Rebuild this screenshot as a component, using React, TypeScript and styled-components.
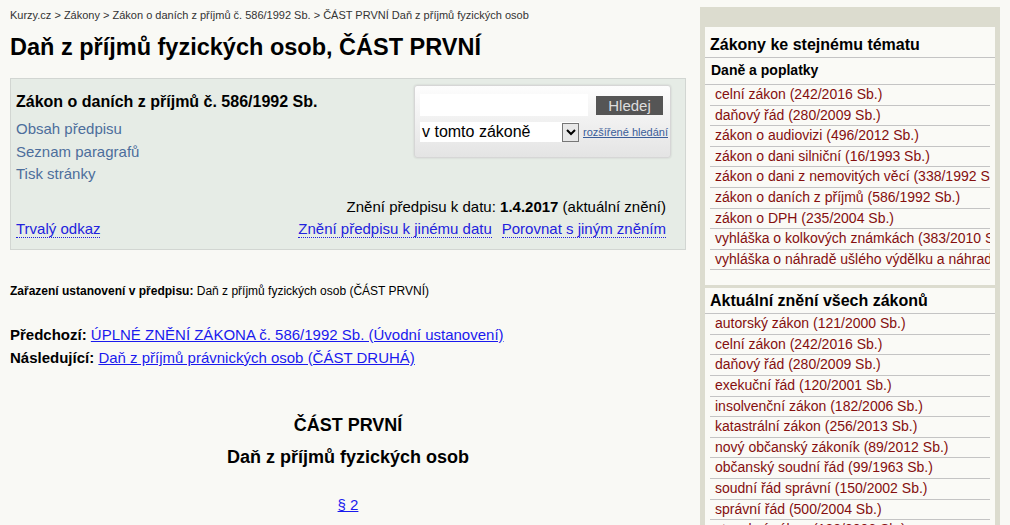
import React from "react";
import styled, { createGlobalStyle } from "styled-components";

const Global = createGlobalStyle`
  html, body { margin: 0; padding: 0; background: #f9f9f5; }
  body { font-family: "Liberation Sans", Arial, sans-serif; color: #000; }
`;

const Page = styled.div`
  display: flex;
  align-items: flex-start;
  width: 1010px;
  height: 525px;
  overflow: hidden;
`;

const Main = styled.div`
  width: 676px;
  padding: 8px 0 0 10px;
  flex: none;
`;

const Crumbs = styled.div`
  font-size: 11px;
  line-height: 14px;
  color: #333;
`;

const Title = styled.h1`
  margin: 10px 0 0;
  font-size: 23.5px;
  line-height: 30px;
  font-weight: bold;
`;

const Box = styled.div`
  margin-top: 16px;
  height: 172px;
  background: #e6ece6;
  border: 1px solid #d2d6d2;
  box-sizing: border-box;
  padding: 12px 19px 0 5px;
  display: grid;
  grid-template-columns: 1fr auto;
  align-content: start;
`;

const LawName = styled.div`
  font-size: 16px;
  font-weight: bold;
  line-height: 22px;
  margin-bottom: 5px;
`;

const SideLinks = styled.div`
  grid-column: 1;
  grid-row: 1;
  display: flex;
  flex-direction: column;
`;

const MutedLink = styled.a`
  color: #4d6e9c;
  font-size: 15px;
  line-height: 22.5px;
  text-decoration: none;
`;

const SearchBox = styled.div`
  grid-column: 2;
  grid-row: 1;
  align-self: start;
  width: 257px;
  height: 73px;
  margin-top: -6px;
  margin-right: -5px;
  box-sizing: border-box;
  border: 1px solid #d6d6d6;
  border-radius: 3px;
  background: linear-gradient(#fdfdfd, #e4e4e4);
  box-shadow: 0 0 2px rgba(0, 0, 0, 0.15);
  padding: 8px 5px 0 5px;
  display: flex;
  flex-direction: column;
  gap: 6px;
`;

const SearchRow = styled.div`
  display: flex;
  align-items: center;
  white-space: nowrap;
`;

const Input = styled.div`
  width: 168px;
  height: 22px;
  background: #fff;
`;

const Button = styled.div`
  margin-left: 8px;
  width: 67px;
  height: 19px;
  background: #555;
  color: #ddd;
  font-size: 15px;
  line-height: 19px;
  text-align: center;
`;

const Select = styled.div`
  flex: none;
  width: 159px;
  height: 20px;
  background: #fff;
  display: flex;
  align-items: center;
  justify-content: space-between;
  font-size: 16px;
  padding-left: 2px;
  box-sizing: border-box;
`;

const Arrow = styled.span`
  width: 17px;
  height: 19px;
  box-sizing: border-box;
  border: 1px solid #777;
  background: #e8e8e8;
  display: flex;
  align-items: center;
  justify-content: center;
`;

const SmallLink = styled.a`
  margin-left: 4px;
  font-size: 11px;
  color: #3a5d99;
  text-decoration: underline;
`;

const DateLine = styled.div`
  grid-column: 1 / span 2;
  text-align: right;
  font-size: 15px;
  line-height: 20px;
  margin-top: 11px;
`;

const BottomLinks = styled.div`
  grid-column: 1 / span 2;
  display: flex;
  gap: 10px;
  margin-top: 3px;
  font-size: 15px;
  line-height: 20px;
`;

const DotLink = styled.a<{ $grow?: boolean }>`
  color: #2222dd;
  text-decoration: none;
  border-bottom: 1px dotted #2222dd;
  line-height: 17px;
  ${(p) => (p.$grow ? "margin-right: auto;" : "")}
`;

const Placement = styled.div`
  margin-top: 34px;
  font-size: 12px;
  line-height: 14px;
`;

const Nav = styled.div`
  margin-top: 25px;
  font-size: 15px;
  line-height: 23px;
`;

const NavLink = styled.a`
  color: #1a1aee;
  text-decoration: underline;
`;

const Center = styled.div`
  text-align: center;
  margin-top: 40px;
`;

const Heading = styled.div`
  font-size: 18px;
  font-weight: bold;
  line-height: 32px;
`;

const ParaLink = styled.a`
  display: inline-block;
  margin-top: 23px;
  font-size: 15px;
  color: #1a1aee;
  text-decoration: underline;
`;

const Sidebar = styled.div`
  margin: 7px 0 0 14px;
  width: 300px;
  height: 530px;
  flex: none;
  background: #dcdccf;
  padding: 20px 5px 0;
  box-sizing: border-box;
  display: flex;
  flex-direction: column;
  gap: 3px;
`;

const Panel = styled.div<{ $h?: number }>`
  background: #fafaf6;
  ${(p) => (p.$h ? `height: ${p.$h}px;` : "")}
  overflow: hidden;
`;

const PanelTitle = styled.div<{ $top: number }>`
  font-size: 16px;
  font-weight: bold;
  padding: ${(p) => p.$top}px 0 0 5px;
  line-height: 18px;
  padding-bottom: 3px;
  border-bottom: 1px solid #c4c4c4;
`;

const SubTitle = styled.div`
  font-size: 14px;
  font-weight: bold;
  padding: 4px 0 0 6px;
  line-height: 17px;
  padding-bottom: 5px;
  border-bottom: 1px solid #c4c4c4;
`;

const List = styled.ul`
  list-style: none;
  margin: 0 5px 0 5px;
  padding: 0;
`;

const Item = styled.li`
  border-bottom: 1px solid #c4c4c4;
  height: 19.6px;
  line-height: 19px;
  padding-left: 5px;
  font-size: 14px;
  white-space: nowrap;
  overflow: hidden;
  color: #850f0f;
`;

const topic = [
  "celní zákon (242/2016 Sb.)",
  "daňový řád (280/2009 Sb.)",
  "zákon o audiovizi (496/2012 Sb.)",
  "zákon o dani silniční (16/1993 Sb.)",
  "zákon o dani z nemovitých věcí (338/1992 Sb.)",
  "zákon o daních z příjmů (586/1992 Sb.)",
  "zákon o DPH (235/2004 Sb.)",
  "vyhláška o kolkových známkách (383/2010 Sb.)",
  "vyhláška o náhradě ušlého výdělku a náhradě nákladů",
];

const all = [
  "autorský zákon (121/2000 Sb.)",
  "celní zákon (242/2016 Sb.)",
  "daňový řád (280/2009 Sb.)",
  "exekuční řád (120/2001 Sb.)",
  "insolvenční zákon (182/2006 Sb.)",
  "katastrální zákon (256/2013 Sb.)",
  "nový občanský zákoník (89/2012 Sb.)",
  "občanský soudní řád (99/1963 Sb.)",
  "soudní řád správní (150/2002 Sb.)",
  "správní řád (500/2004 Sb.)",
  "stavební zákon (183/2006 Sb.)",
];

export default function App() {
  return (
    <>
      <Global />
      <Page>
        <Main>
          <Crumbs>
            Kurzy.cz &gt; Zákony &gt; Zákon o daních z příjmů č. 586/1992 Sb. &gt; ČÁST PRVNÍ Daň z příjmů fyzických osob
          </Crumbs>
          <Title>Daň z příjmů fyzických osob, ČÁST PRVNÍ</Title>
          <Box>
            <SideLinks>
              <LawName>Zákon o daních z příjmů č. 586/1992 Sb.</LawName>
              <MutedLink>Obsah předpisu</MutedLink>
              <MutedLink>Seznam paragrafů</MutedLink>
              <MutedLink>Tisk stránky</MutedLink>
            </SideLinks>
            <SearchBox>
              <SearchRow>
                <Input />
                <Button>Hledej</Button>
              </SearchRow>
              <SearchRow>
                <Select>
                  v tomto zákoně
                  <Arrow>
                    <svg width="10" height="8" viewBox="0 0 10 8">
                      <path d="M1 2 L5 6 L9 2" fill="none" stroke="#000" strokeWidth="2" />
                    </svg>
                  </Arrow>
                </Select>
                <SmallLink>rozšířené hledání</SmallLink>
              </SearchRow>
            </SearchBox>
            <DateLine>
              Znění předpisu k datu: <b>1.4.2017</b> (aktuální znění)
            </DateLine>
            <BottomLinks>
              <DotLink $grow>Trvalý odkaz</DotLink>
              <DotLink>Znění předpisu k jinému datu</DotLink>
              <DotLink>Porovnat s jiným zněním</DotLink>
            </BottomLinks>
          </Box>
          <Placement>
            <b>Zařazení ustanovení v předpisu:</b> Daň z příjmů fyzických osob (ČÁST PRVNÍ)
          </Placement>
          <Nav>
            <div>
              <b>Předchozí:</b> <NavLink>ÚPLNÉ ZNĚNÍ ZÁKONA č. 586/1992 Sb. (Úvodní ustanovení)</NavLink>
            </div>
            <div>
              <b>Následující:</b> <NavLink>Daň z příjmů právnických osob (ČÁST DRUHÁ)</NavLink>
            </div>
          </Nav>
          <Center>
            <Heading>ČÁST PRVNÍ</Heading>
            <Heading>Daň z příjmů fyzických osob</Heading>
            <ParaLink>§ 2</ParaLink>
          </Center>
        </Main>
        <Sidebar>
          <Panel $h={262}>
            <PanelTitle $top={9}>Zákony ke stejnému tématu</PanelTitle>
            <SubTitle>Daně a poplatky</SubTitle>
            <List>
              {topic.map((t) => (
                <Item key={t}>{t}</Item>
              ))}
            </List>
          </Panel>
          <Panel>
            <PanelTitle $top={4}>Aktuální znění všech zákonů</PanelTitle>
            <List>
              {all.map((t) => (
                <Item key={t}>{t}</Item>
              ))}
            </List>
          </Panel>
        </Sidebar>
      </Page>
    </>
  );
}
